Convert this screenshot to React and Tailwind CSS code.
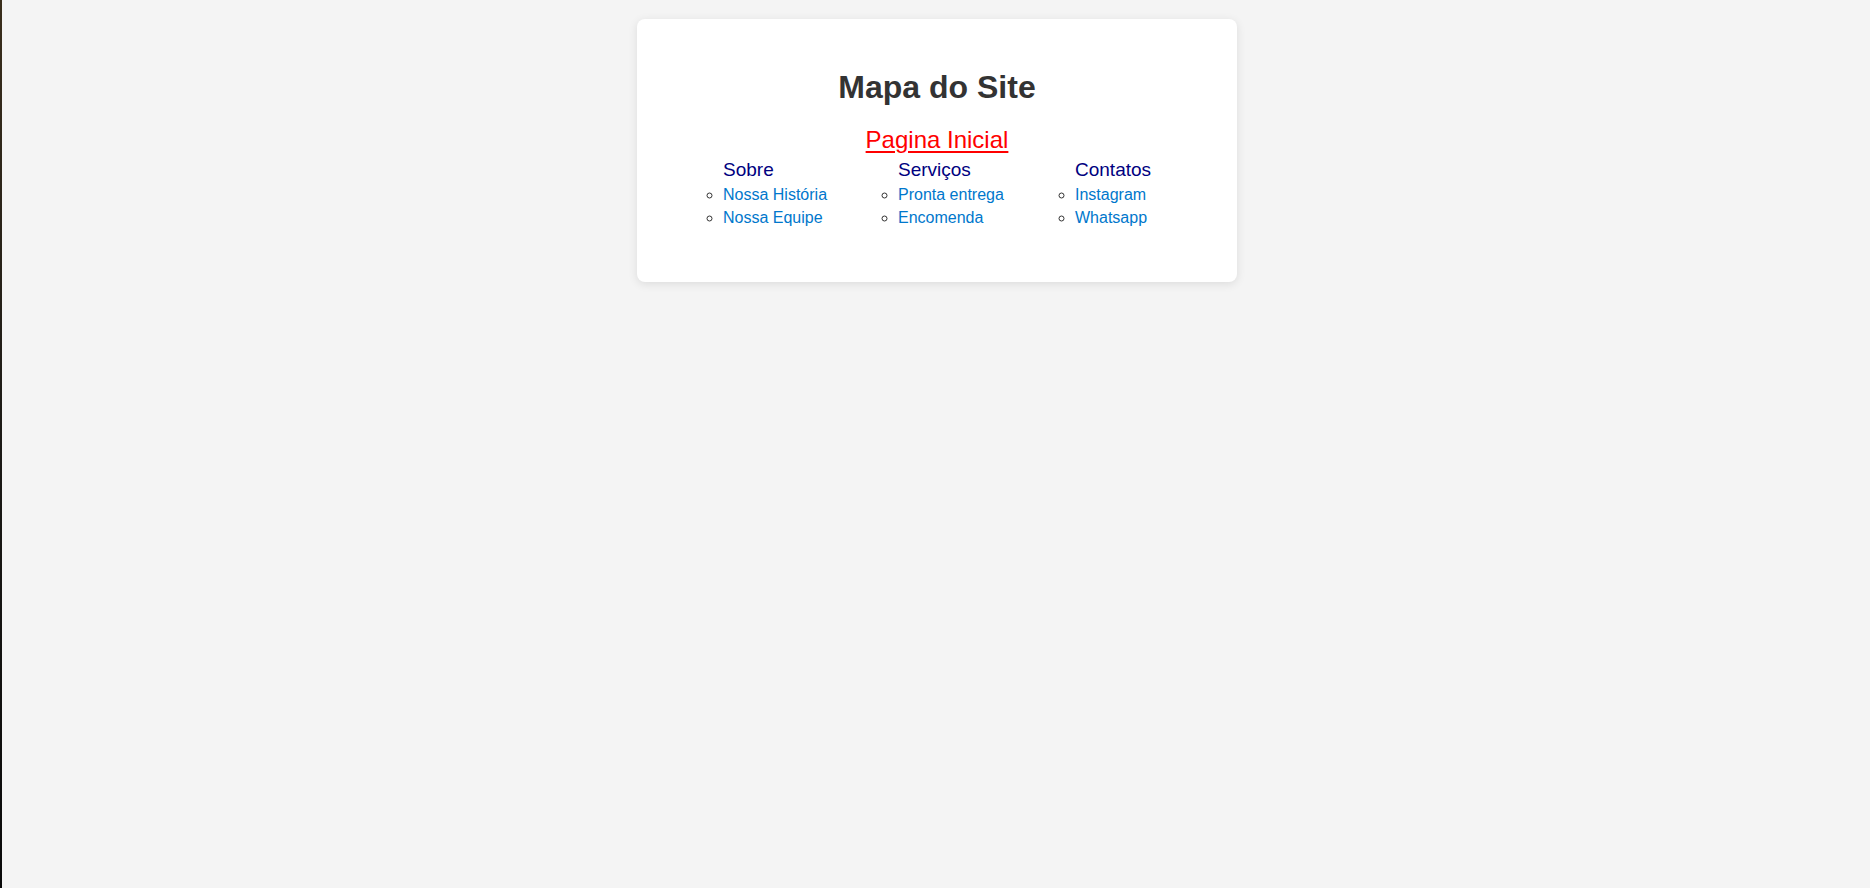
const sections = [
  { title: 'Sobre', width: 'w-[175px]', links: ['Nossa História', 'Nossa Equipe'] },
  { title: 'Serviços', width: 'w-[177px]', links: ['Pronta entrega', 'Encomenda'] },
  { title: 'Contatos', width: 'w-[140px]', links: ['Instagram', 'Whatsapp'] },
];

export default function App() {
  return (
    <div className="flex min-h-screen bg-[#f4f4f4] font-['Liberation_Sans',Arial,sans-serif]">
      <div className="w-[2px] shrink-0 bg-gradient-to-b from-[#3a2e1c] via-[#1c1a16] to-[#0a0a0a]" />
      <div className="flex-1 flex justify-center pt-[19px] pl-[2px]">
        <div className="w-[600px] h-[263px] bg-white rounded-lg shadow-[0_2px_10px_rgba(0,0,0,0.1)] pt-[50px]">
          <h1 className="text-center text-[32px] leading-[37px] font-bold text-[#333]">Mapa do Site</h1>

          <div className="mt-[20px] text-center">
            <a href="#" className="text-[24px] leading-[28px] text-[#ff0000] underline decoration-[2px] underline-offset-[3px]">
              Pagina Inicial
            </a>
          </div>

          <div className="flex pl-[86px] mt-[4px]">
            {sections.map((section) => (
              <div key={section.title} className={section.width}>
                <p className="text-[19px] leading-[22px] text-[#000080]">{section.title}</p>
                <ul className="list-[circle] list-outside mt-[2px] text-[#333]">
                  {section.links.map((link) => (
                    <li key={link} className="text-[16px] leading-[23px]">
                      <a href="#" className="text-[#0077cc]">{link}</a>
                    </li>
                  ))}
                </ul>
              </div>
            ))}
          </div>
        </div>
      </div>
    </div>
  );
}
